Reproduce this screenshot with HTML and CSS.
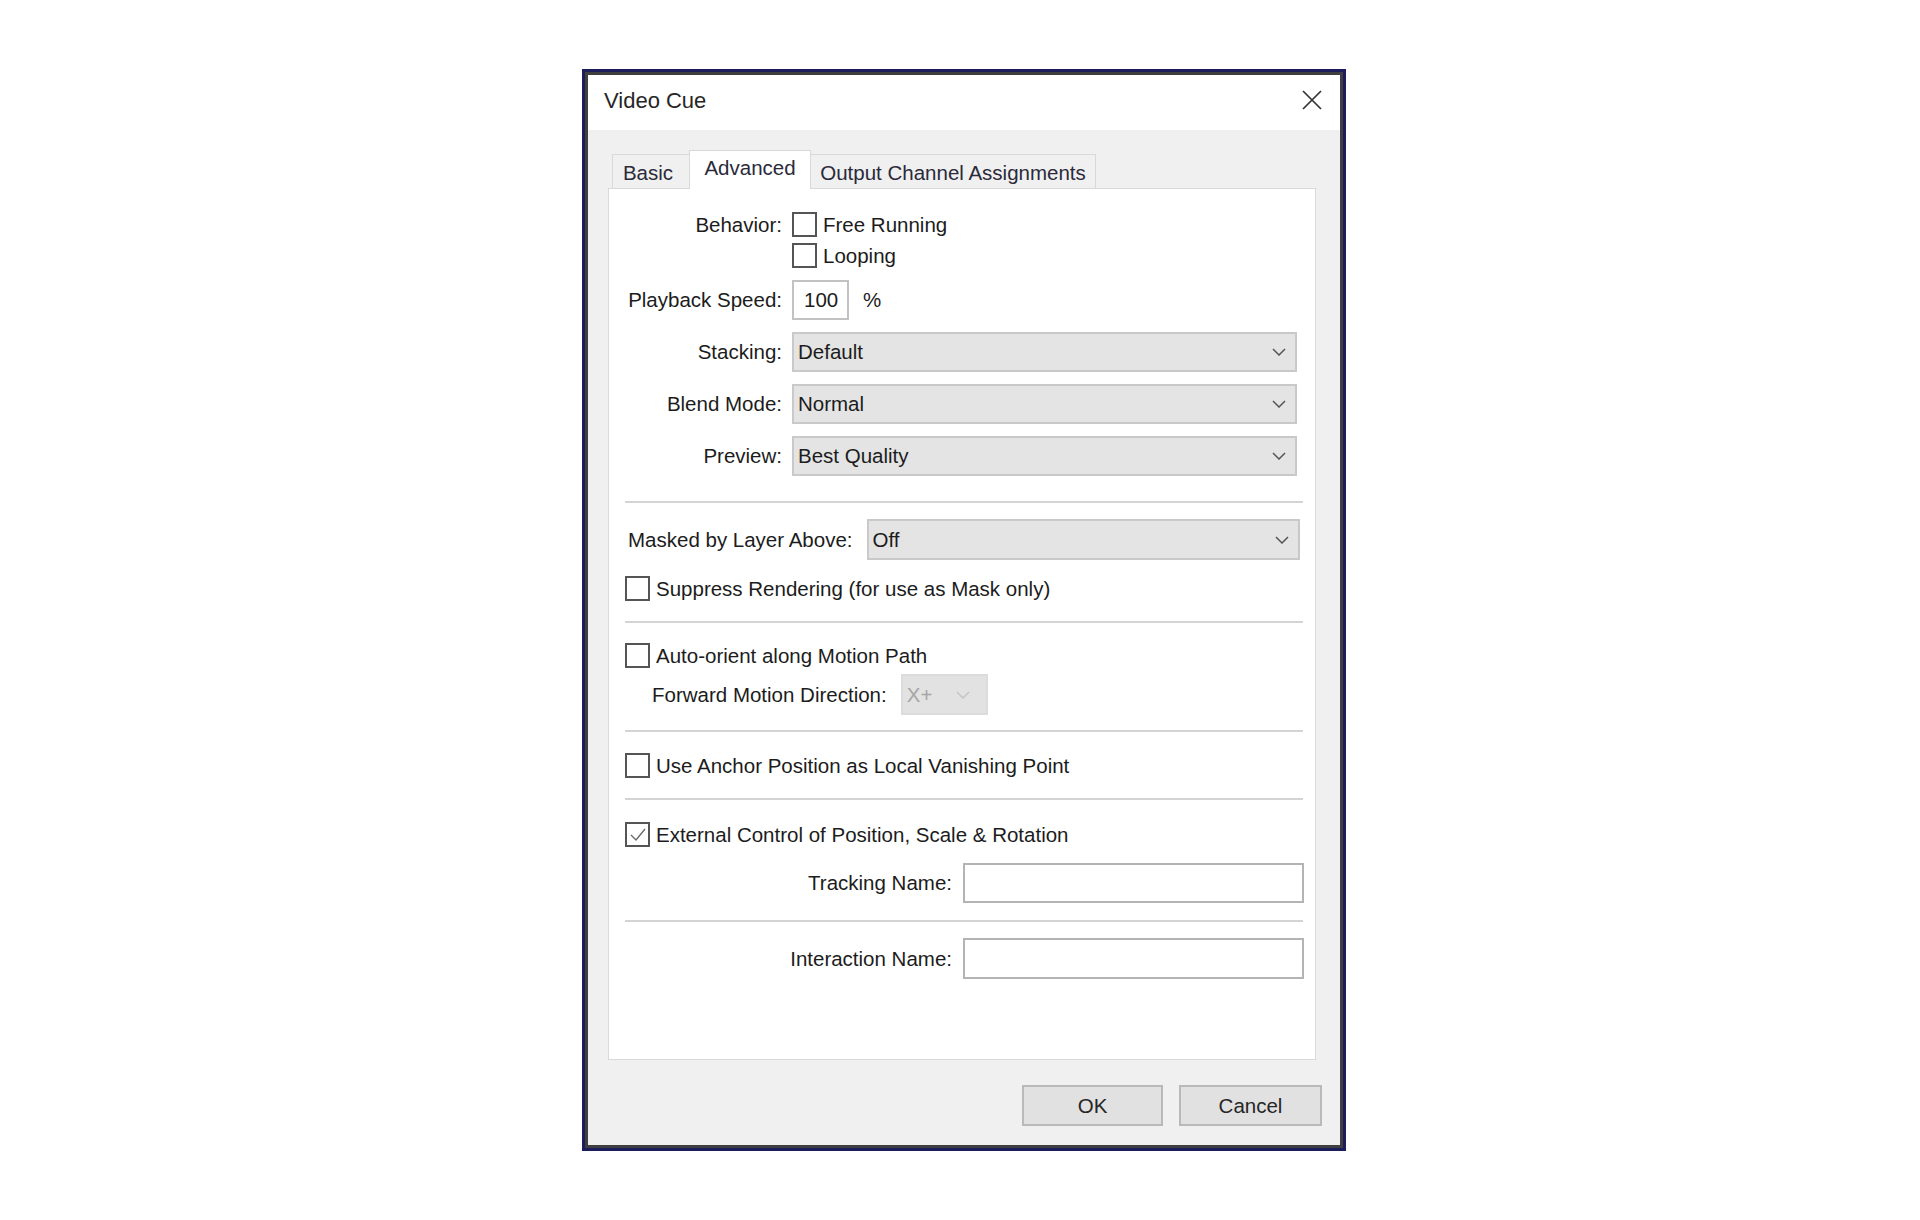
FILE: index.html
```html
<!DOCTYPE html>
<html>
<head>
<meta charset="utf-8">
<title>Video Cue</title>
<link rel="stylesheet" href="styles.css">
</head>
<body>
<div class="dialog">
  <div class="frame">
    <div class="titlebar">
      <span class="title">Video Cue</span>
      <svg class="close" width="20" height="20" viewBox="0 0 20 20"><path d="M1 1 L19 19 M19 1 L1 19" stroke="#333" stroke-width="1.7" fill="none"/></svg>
    </div>

    <div class="tabs">
      <div class="tab basic">Basic</div>
      <div class="tab active">Advanced</div>
      <div class="tab output">Output Channel Assignments</div>
    </div>

    <div class="panel">
      <div class="grid-top">
        <div class="lbl lbl-top">Behavior:</div>
        <div class="checks">
          <div class="check"><span class="box"></span><span>Free Running</span></div>
          <div class="check"><span class="box"></span><span>Looping</span></div>
        </div>

        <div class="lbl">Playback Speed:</div>
        <div class="speed"><span class="field small">100</span><span class="pct">%</span></div>

        <div class="lbl">Stacking:</div>
        <div class="select"><span>Default</span><svg class="chev" width="14" height="8" viewBox="0 0 14 8"><path d="M1 1 L7 7 L13 1" stroke="#555" stroke-width="1.5" fill="none"/></svg></div>

        <div class="lbl">Blend Mode:</div>
        <div class="select"><span>Normal</span><svg class="chev" width="14" height="8" viewBox="0 0 14 8"><path d="M1 1 L7 7 L13 1" stroke="#555" stroke-width="1.5" fill="none"/></svg></div>

        <div class="lbl">Preview:</div>
        <div class="select"><span>Best Quality</span><svg class="chev" width="14" height="8" viewBox="0 0 14 8"><path d="M1 1 L7 7 L13 1" stroke="#555" stroke-width="1.5" fill="none"/></svg></div>
      </div>

      <div class="sep sep-1"></div>

      <div class="row masked">
        <span class="lbl-inline">Masked by Layer Above:</span>
        <div class="select grow"><span>Off</span><svg class="chev" width="14" height="8" viewBox="0 0 14 8"><path d="M1 1 L7 7 L13 1" stroke="#555" stroke-width="1.5" fill="none"/></svg></div>
      </div>

      <div class="check suppress"><span class="box"></span><span>Suppress Rendering (for use as Mask only)</span></div>

      <div class="sep sep-2"></div>

      <div class="check auto"><span class="box"></span><span>Auto-orient along Motion Path</span></div>

      <div class="row forward">
        <span class="lbl-inline">Forward Motion Direction:</span>
        <div class="select disabled"><span>X+</span><svg class="chev" width="14" height="8" viewBox="0 0 14 8"><path d="M1 1 L7 7 L13 1" stroke="#c4c4c4" stroke-width="1.5" fill="none"/></svg></div>
      </div>

      <div class="sep sep-3"></div>

      <div class="check anchor"><span class="box"></span><span>Use Anchor Position as Local Vanishing Point</span></div>

      <div class="sep sep-4"></div>

      <div class="check external"><span class="box checked"><svg width="18" height="18" viewBox="0 0 18 18"><path d="M2 9 L7 14 L16 3" stroke="#6a6a6a" stroke-width="1.4" fill="none"/></svg></span><span>External Control of Position, Scale &amp; Rotation</span></div>

      <div class="row named tracking">
        <span class="lbl-inline">Tracking Name:</span>
        <span class="field wide"></span>
      </div>

      <div class="sep sep-5"></div>

      <div class="row named interaction">
        <span class="lbl-inline">Interaction Name:</span>
        <span class="field wide tall"></span>
      </div>
    </div>

    <div class="footer">
      <div class="btn ok">OK</div>
      <div class="btn cancel">Cancel</div>
    </div>
  </div>
</div>
</body>
</html>
```

FILE: styles.css
```css
* { box-sizing: border-box; }

body {
  margin: 0;
  padding: 69px 0 0 582px;
  background: #ffffff;
  font-family: "Liberation Sans", Arial, sans-serif;
  font-size: 20.5px;
  line-height: 24px;
  color: #1c1c1c;
}

.dialog {
  width: 764px;
  height: 1082px;
  border: 3px solid #1d1d5c;
  background: #f0f0f0;
}

.frame {
  height: 100%;
  border: 3px solid #3f3f3f;
  display: flex;
  flex-direction: column;
}

.titlebar {
  height: 55px;
  flex: none;
  background: #ffffff;
  display: flex;
  align-items: center;
  justify-content: space-between;
  padding: 0 18px 0 16px;
}

.title {
  font-size: 22px;
  color: #262626;
  margin-top: -4px;
}

.close {
  margin-top: -6px;
}

.tabs {
  display: flex;
  align-items: flex-end;
  height: 38px;
  margin: 20px 0 0 24px;
  flex: none;
}

.tab {
  height: 34px;
  border: 1px solid #d9d9d9;
  border-bottom: none;
  background: #f0f0f0;
  display: flex;
  align-items: center;
  justify-content: center;
  color: #2a2a3a;
  padding-top: 2px;
}

.tab.basic { width: 77px; border-right: none; padding-right: 6px; }
.tab.output { width: 285px; border-left: none; }

.tab.active {
  width: 122px;
  height: 39px;
  background: #ffffff;
  margin-bottom: -1px;
  position: relative;
  z-index: 1;
  padding-top: 0;
  padding-bottom: 4px;
}

.panel {
  height: 872px;
  flex: none;
  margin: 0 24px 0 20px;
  background: #ffffff;
  border: 1px solid #d9d9d9;
  padding: 23px 12px 0 16px;
  display: flex;
  flex-direction: column;
}

.grid-top {
  display: grid;
  grid-template-columns: 157px 1fr;
  column-gap: 10px;
  row-gap: 12px;
  margin-right: 6px;
}

.lbl {
  text-align: right;
  align-self: center;
  white-space: nowrap;
}

.lbl-top { align-self: start; padding-top: 1px; }

.checks {
  display: flex;
  flex-direction: column;
  gap: 6px;
}

.check {
  display: flex;
  align-items: center;
  gap: 6px;
  height: 25px;
  white-space: nowrap;
}

.box {
  width: 25px;
  height: 25px;
  flex: none;
  border: 2px solid #555555;
  background: #ffffff;
  display: flex;
  align-items: center;
  justify-content: center;
}

.speed {
  display: flex;
  align-items: center;
  gap: 14px;
}

.field {
  height: 40px;
  background: #ffffff;
  border: 2px solid #b4b4b4;
  display: flex;
  align-items: center;
}

.field.small {
  width: 57px;
  padding-left: 10px;
  border-color: #c2c2c2;
}

.field.wide { width: 341px; }
.field.tall { height: 41px; }

.select {
  height: 40px;
  background: #e4e4e4;
  border: 2px solid #c9c9c9;
  display: flex;
  align-items: center;
  justify-content: space-between;
  padding: 0 9px 0 4px;
}

.select.grow {
  flex: 1;
  height: 41px;
  margin-right: 3px;
}

.select.disabled {
  width: 87px;
  height: 41px;
  background: #e2e2e2;
  border-color: #dcdcdc;
  color: #a6a6a6;
  padding: 0 16px 0 4px;
}

.sep {
  height: 2px;
  background: #d4d4d4;
  flex: none;
}

.sep-1 { margin-top: 25px; }
.sep-2 { margin-top: 20px; }
.sep-3 { margin-top: 15px; }
.sep-4 { margin-top: 20px; }
.sep-5 { margin-top: 17px; }

.row {
  display: flex;
  align-items: center;
  white-space: nowrap;
}

.masked {
  margin-top: 16px;
  gap: 14px;
  padding-left: 3px;
}

.suppress { margin-top: 16px; }
.auto { margin-top: 20px; }

.forward {
  margin-top: 6px;
  gap: 14px;
  padding-left: 27px;
}

.anchor { margin-top: 21px; }
.external { margin-top: 22px; }

.named {
  justify-content: flex-end;
  gap: 11px;
  margin-right: -1px;
}

.tracking { margin-top: 16px; }
.interaction { margin-top: 16px; }

.footer {
  display: flex;
  justify-content: flex-end;
  gap: 16px;
  padding: 25px 18px 0 0;
}

.btn {
  height: 41px;
  background: #e1e1e1;
  border: 2px solid #b9b9b9;
  display: flex;
  align-items: center;
  justify-content: center;
  color: #262626;
}

.btn.ok { width: 141px; }
.btn.cancel { width: 143px; }
```
